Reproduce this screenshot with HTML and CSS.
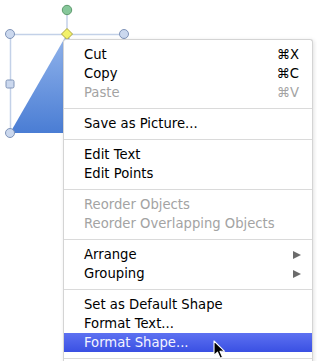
FILE: index.html
```
<!DOCTYPE html>
<html>
<head>
<meta charset="utf-8">
<link rel="stylesheet" href="styles.css">
</head>
<body>
<div class="canvas">
  <svg class="shape" width="140" height="140" viewBox="0 0 140 140">
    <defs>
      <linearGradient id="fill" x1="0" y1="0" x2="0" y2="1">
        <stop offset="0" stop-color="#93b5ec"/>
        <stop offset="1" stop-color="#4a7dd4"/>
      </linearGradient>
    </defs>
    <polygon points="10,133 67,34 124,133" fill="url(#fill)"/>
    <line x1="10" y1="34.5" x2="124" y2="34.5" stroke="#c3d1e8" stroke-width="1.5"/>
    <line x1="10.5" y1="34" x2="10.5" y2="133" stroke="#c3d1e8" stroke-width="1.5"/>
    <line x1="67" y1="14" x2="67" y2="32" stroke="#c3d1e8" stroke-width="1.5"/>
    <circle cx="10" cy="34" r="4.5" fill="#cbd8ee" stroke="#8094b8" stroke-width="1"/>
    <circle cx="124" cy="34" r="4.5" fill="#cbd8ee" stroke="#8094b8" stroke-width="1"/>
    <circle cx="10" cy="133" r="4.5" fill="#cbd8ee" stroke="#8094b8" stroke-width="1"/>
    <rect x="6" y="80" width="8" height="8" rx="1.5" fill="#cbd8ee" stroke="#8094b8" stroke-width="1"/>
    <circle cx="67" cy="10" r="4.7" fill="#86c79a" stroke="#5e9a6e" stroke-width="1"/>
    <polygon points="67,28.5 72.5,34 67,39.5 61.5,34" fill="#f2f16a" stroke="#aea63e" stroke-width="1"/>
  </svg>

  <div class="menu">
    <div class="item"><span>Cut</span><span class="key">⌘X</span></div>
    <div class="item"><span>Copy</span><span class="key">⌘C</span></div>
    <div class="item disabled"><span>Paste</span><span class="key">⌘V</span></div>
    <div class="sep"></div>
    <div class="item"><span>Save as Picture...</span></div>
    <div class="sep"></div>
    <div class="item"><span>Edit Text</span></div>
    <div class="item"><span>Edit Points</span></div>
    <div class="sep"></div>
    <div class="item disabled"><span>Reorder Objects</span></div>
    <div class="item disabled"><span>Reorder Overlapping Objects</span></div>
    <div class="sep"></div>
    <div class="item"><span>Arrange</span><span class="arrow"></span></div>
    <div class="item"><span>Grouping</span><span class="arrow"></span></div>
    <div class="sep"></div>
    <div class="item"><span>Set as Default Shape</span></div>
    <div class="item"><span>Format Text...</span></div>
    <div class="item active"><span>Format Shape...</span></div>
    <div class="sep"></div>
  </div>

  <svg class="cursor" width="14" height="20" viewBox="0 0 14 20">
    <path d="M1,1 L1,15.5 L4.5,12.2 L7.2,18.3 L9.6,17.3 L7,11.3 L11.6,11.3 Z" fill="#000" stroke="#fff" stroke-width="1.1" stroke-linejoin="round"/>
  </svg>
</div>
</body>
</html>
```

FILE: styles.css
```
html, body {
  margin: 0;
  padding: 0;
  background: #fff;
}

.canvas {
  position: relative;
  width: 317px;
  height: 361px;
  overflow: hidden;
  font-family: "DejaVu Sans", "Liberation Sans", sans-serif;
}

.shape {
  position: absolute;
  left: 0;
  top: 0;
}

.menu {
  position: absolute;
  left: 63px;
  top: 39px;
  width: 248px;
  padding-top: 5px;
  background: #fff;
  border: 1px solid #d4d4d4;
  border-bottom: none;
  border-radius: 3px 3px 0 0;
  box-shadow: 1px 1px 4px rgba(0, 0, 0, 0.12);
}

.item {
  display: flex;
  justify-content: space-between;
  align-items: center;
  height: 19px;
  padding: 0 13px 0 20px;
  font-size: 13.2px;
  color: #000;
}

.item.disabled {
  color: #a3a3a3;
}

.item.active {
  background: linear-gradient(#5d71f1, #3a50e3);
  color: #f4f4ff;
}

.arrow {
  width: 0;
  height: 0;
  margin-right: -2px;
  border-top: 4.5px solid transparent;
  border-bottom: 4.5px solid transparent;
  border-left: 8px solid #6b6b6b;
}

.sep {
  height: 1px;
  margin: 6px 0 5px;
  background: #dadada;
}

.cursor {
  position: absolute;
  left: 213px;
  top: 340px;
}
```
